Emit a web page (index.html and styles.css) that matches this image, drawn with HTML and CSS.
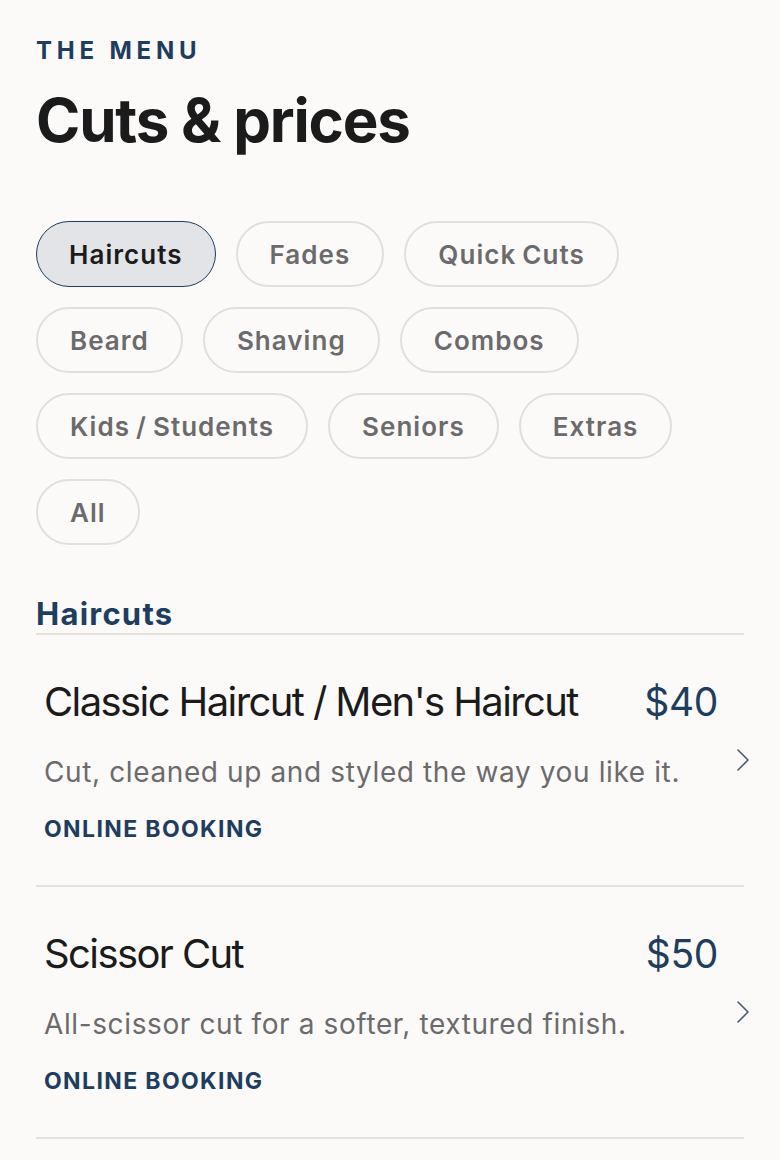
FILE: index.html
```html
<!DOCTYPE html>
<html lang="en">
<head>
<meta charset="utf-8">
<title>Cuts &amp; prices</title>
<link rel="stylesheet" href="styles.css">
</head>
<body>
<main class="page">
  <header class="intro">
    <p class="eyebrow">THE MENU</p>
    <h1 class="title">Cuts &amp; prices</h1>
  </header>

  <nav class="chips">
    <button class="chip chip-active">Haircuts</button>
    <button class="chip">Fades</button>
    <button class="chip">Quick Cuts</button>
    <button class="chip">Beard</button>
    <button class="chip">Shaving</button>
    <button class="chip">Combos</button>
    <button class="chip">Kids / Students</button>
    <button class="chip">Seniors</button>
    <button class="chip">Extras</button>
    <button class="chip">All</button>
  </nav>

  <section class="section">
    <h2 class="section-title">Haircuts</h2>
    <ul class="items">
      <li class="item">
        <div class="item-body">
          <div class="item-head">
            <span class="item-name">Classic Haircut / Men's Haircut</span>
            <span class="item-price">$40</span>
          </div>
          <p class="item-desc">Cut, cleaned up and styled the way you like it.</p>
          <span class="item-tag">ONLINE BOOKING</span>
        </div>
        <svg class="chevron" viewBox="0 0 14 24" width="14" height="24" aria-hidden="true"><path d="M2 2 L12 12 L2 22" fill="none" stroke="currentColor" stroke-width="1.6" stroke-linecap="round" stroke-linejoin="round"/></svg>
      </li>
      <li class="item">
        <div class="item-body">
          <div class="item-head">
            <span class="item-name">Scissor Cut</span>
            <span class="item-price">$50</span>
          </div>
          <p class="item-desc">All-scissor cut for a softer, textured finish.</p>
          <span class="item-tag">ONLINE BOOKING</span>
        </div>
        <svg class="chevron" viewBox="0 0 14 24" width="14" height="24" aria-hidden="true"><path d="M2 2 L12 12 L2 22" fill="none" stroke="currentColor" stroke-width="1.6" stroke-linecap="round" stroke-linejoin="round"/></svg>
      </li>
    </ul>
  </section>
</main>
</body>
</html>
```

FILE: styles.css
```css
* { box-sizing: border-box; }

html, body {
  margin: 0;
  padding: 0;
  background: #fbfaf8;
}

body {
  font-family: Inter, "Noto Sans", sans-serif;
  color: #1b1b1b;
}

.page {
  padding: 36px 36px 0;
}

.intro {
  display: flex;
  flex-direction: column;
}

.eyebrow {
  margin: 0;
  font-size: 24px;
  line-height: 30px;
  font-weight: 700;
  letter-spacing: 0.2em;
  color: #1f3d5e;
}

.title {
  margin: 22px 0 0;
  font-size: 60px;
  line-height: 64px;
  font-weight: 700;
  letter-spacing: -0.02em;
  color: #1b1b1b;
}

.chips {
  margin-top: 69px;
  display: flex;
  flex-wrap: wrap;
  gap: 20px;
}

.chip {
  height: 66px;
  padding: 0 32px;
  border: 2px solid #e2dfdb;
  border-radius: 33px;
  background: transparent;
  font-family: Inter, "Noto Sans", sans-serif;
  font-size: 26px;
  font-weight: 600;
  letter-spacing: 0.04em;
  word-spacing: -0.06em;
  color: #6b6b6d;
  cursor: pointer;
}

.chip-active {
  border: 1.5px solid #1f3d5e;
  background: #e2e4e7;
  color: #1b1b1b;
}

.section {
  margin-top: 51px;
}

.section-title {
  margin: 0;
  padding-bottom: 1px;
  font-size: 31px;
  line-height: 36px;
  font-weight: 700;
  letter-spacing: 0.04em;
  color: #1f3d5e;
  border-bottom: 2px solid #e4e1dd;
}

.items {
  list-style: none;
  margin: 0;
  padding: 0;
}

.item {
  display: flex;
  align-items: center;
  gap: 18px;
  padding: 42px 0 42px 8px;
  border-bottom: 2px solid #e4e1dd;
}

.item-body {
  flex: 1;
  display: flex;
  flex-direction: column;
}

.item-head {
  display: flex;
  justify-content: space-between;
  align-items: baseline;
}

.item-name {
  font-size: 40px;
  line-height: 50px;
  font-weight: 400;
  letter-spacing: -0.04em;
  color: #1b1b1b;
}

.item-price {
  font-size: 39px;
  line-height: 50px;
  font-weight: 400;
  letter-spacing: -0.01em;
  color: #1f3d5e;
}

.item-desc {
  margin: 27px 0 0;
  font-size: 28px;
  line-height: 36px;
  color: #6b6b6d;
  letter-spacing: 0.022em;
}

.item-tag {
  margin-top: 25px;
  font-size: 23px;
  line-height: 28px;
  font-weight: 700;
  letter-spacing: 0.06em;
  color: #1f3d5e;
}

.chevron {
  flex: none;
  color: #4d5b70;
  margin-right: -6px;
}
```
